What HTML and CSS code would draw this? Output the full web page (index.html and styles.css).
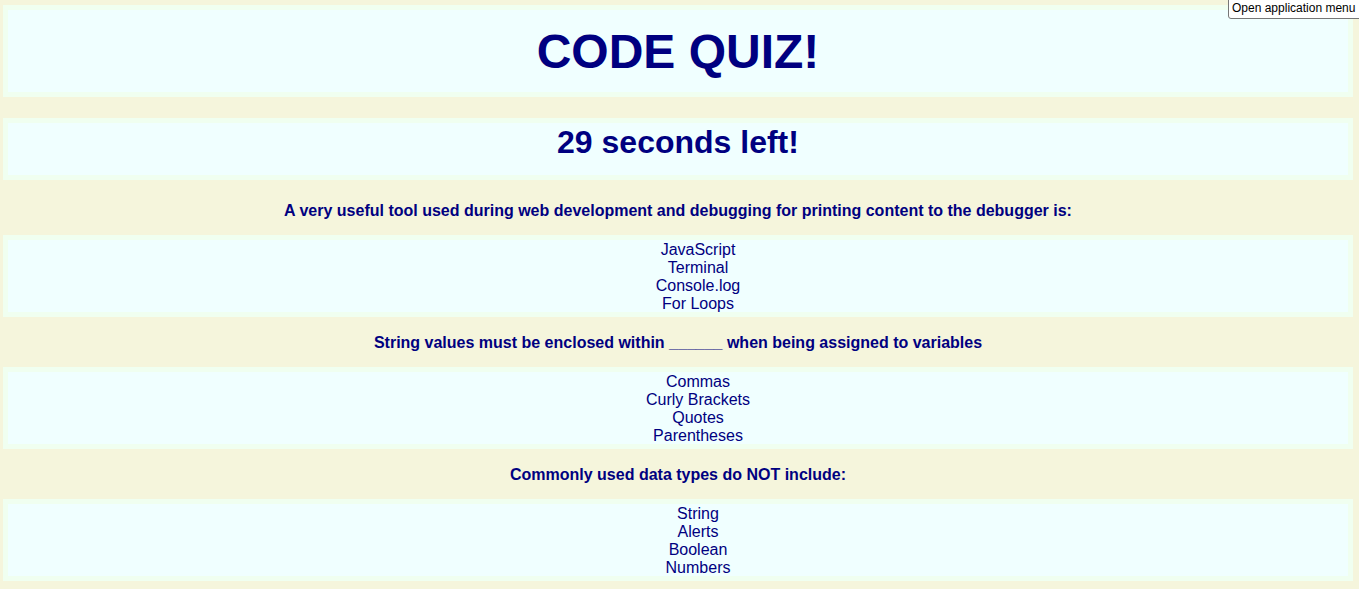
FILE: index.html
```html
<!DOCTYPE html>
<html lang="en">
<head>
<meta charset="utf-8">
<title>Code Quiz</title>
<link rel="stylesheet" href="styles.css">
</head>
<body>
  <header class="panel title-panel">
    <h1 class="title">CODE QUIZ!</h1>
  </header>
  <div class="panel timer-panel">
    <h2 class="timer">29 seconds left!</h2>
  </div>
  <main class="quiz">
    <section class="question">
      <p class="prompt first">A very useful tool used during web development and debugging for printing content to the debugger is:</p>
      <ul class="panel answers">
        <li>JavaScript</li>
        <li>Terminal</li>
        <li>Console.log</li>
        <li>For Loops</li>
      </ul>
    </section>
    <section class="question">
      <p class="prompt">String values must be enclosed within ______ when being assigned to variables</p>
      <ul class="panel answers">
        <li>Commas</li>
        <li>Curly Brackets</li>
        <li>Quotes</li>
        <li>Parentheses</li>
      </ul>
    </section>
    <section class="question">
      <p class="prompt">Commonly used data types do NOT include:</p>
      <ul class="panel answers">
        <li>String</li>
        <li>Alerts</li>
        <li>Boolean</li>
        <li>Numbers</li>
      </ul>
    </section>
  </main>
  <div class="tooltip">Open application menu</div>
</body>
</html>
```

FILE: styles.css
```css
html, body {
  overflow: hidden;
}

body {
  margin: 5px 6px 0 3px;
  background: #f5f5dc;
  color: #000080;
  font-family: "Liberation Sans", Arial, sans-serif;
  font-size: 16px;
  text-align: center;
}

.panel {
  background: #f0ffff;
  border: 5px solid #f0fff0;
}

.title-panel {
  padding: 14px 0 13px;
}

.title {
  margin: 0;
  font-size: 48px;
  line-height: 55px;
  font-weight: bold;
}

.timer-panel {
  margin-top: 21px;
  padding: 1px 0 14px;
}

.timer {
  margin: 0;
  font-size: 32px;
  line-height: 37px;
  font-weight: bold;
}

.prompt {
  margin: 17px 0 15px;
  font-weight: bold;
  line-height: 18px;
}

.prompt.first {
  margin-top: 22px;
}

.answers {
  list-style: none;
  margin: 0;
  padding: 1px 0 0 40px;
  line-height: 18px;
}

.answers li:last-child {
  line-height: 17px;
}

.tooltip {
  position: absolute;
  top: -4px;
  left: 1228px;
  padding: 4px 6px 2px 3px;
  background: #ffffff;
  border: 1px solid #767676;
  border-radius: 3px;
  color: #000000;
  font-family: "Liberation Sans", Arial, sans-serif;
  font-size: 12px;
  line-height: 15px;
  white-space: nowrap;
  text-align: left;
}
```
